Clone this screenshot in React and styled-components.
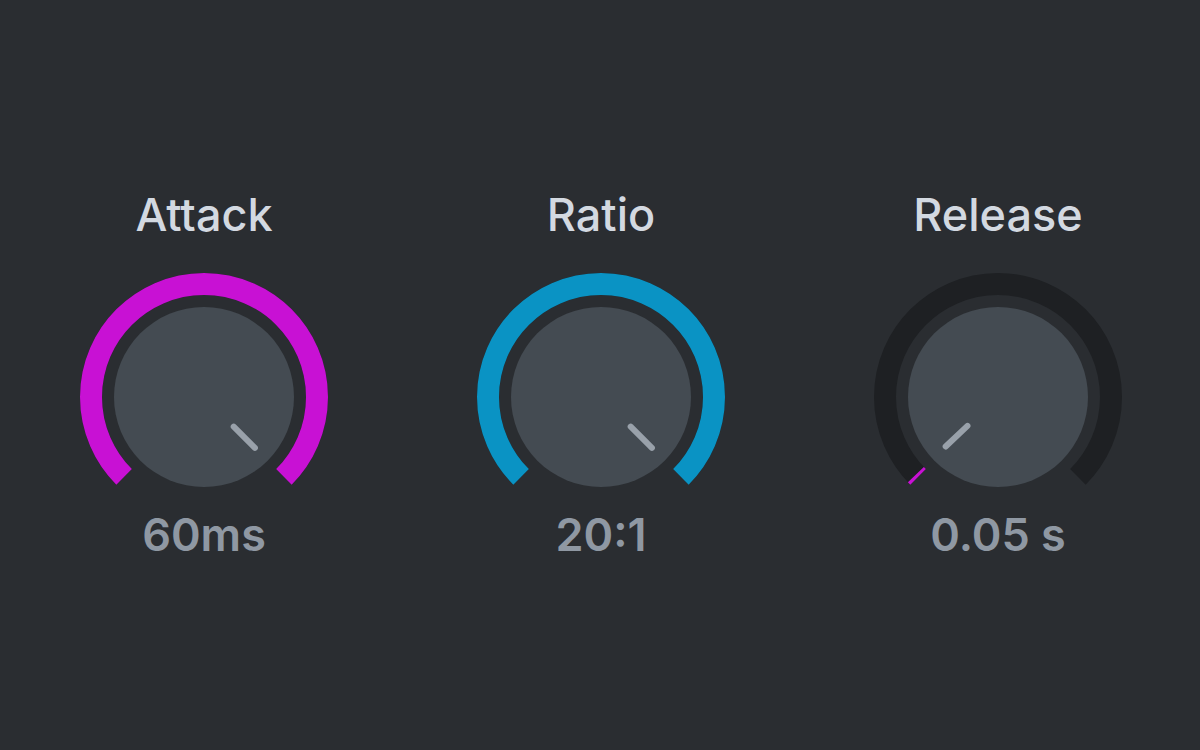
import React from 'react'
import styled, { createGlobalStyle } from 'styled-components'

const knobs = [
  { label: 'Attack', value: '60ms', fill: 1, color: '#c811d4' },
  { label: 'Ratio', value: '20:1', fill: 1, color: '#0a93c4' },
  { label: 'Release', value: '0.05 s', fill: 0.006, color: '#c811d4' },
]

const CX = 124
const CY = 124
const START = -135
const SWEEP = 270

function point(r, deg) {
  const a = (deg * Math.PI) / 180
  return [CX + r * Math.sin(a), CY - r * Math.cos(a)]
}

function arc(r, from, to) {
  const [x1, y1] = point(r, from)
  const [x2, y2] = point(r, to)
  const large = to - from > 180 ? 1 : 0
  return `M ${x1} ${y1} A ${r} ${r} 0 ${large} 1 ${x2} ${y2}`
}

function Knob({ fill, color }) {
  const end = START + SWEEP * fill
  const [px1, py1] = point(42, end)
  const [px2, py2] = point(72, end)
  return (
    <svg width="248" height="216" viewBox="0 0 248 216">
      <path d={arc(113, START, START + SWEEP)} fill="none" stroke="#1e2023" strokeWidth="22" />
      <path d={arc(113, START, end)} fill="none" stroke={color} strokeWidth="22" />
      <circle cx={CX} cy={CY} r="90" fill="#444b52" />
      <line x1={px1} y1={py1} x2={px2} y2={py2} stroke="#99a1aa" strokeWidth="6" strokeLinecap="round" />
    </svg>
  )
}

export default function App() {
  return (
    <>
      <GlobalStyle />
      <Page>
        <Row>
          {knobs.map((k) => (
            <Control key={k.label}>
              <Label>{k.label}</Label>
              <Knob fill={k.fill} color={k.color} />
              <Value>{k.value}</Value>
            </Control>
          ))}
        </Row>
      </Page>
    </>
  )
}

const GlobalStyle = createGlobalStyle`
  * { box-sizing: border-box; }
  html, body { margin: 0; padding: 0; background: #2a2d31; }
  body { font-family: Inter, 'Liberation Sans', sans-serif; }
`

const Page = styled.main`
  min-height: 100vh;
  display: flex;
  align-items: center;
  justify-content: center;
`

const Row = styled.div`
  display: flex;
  gap: 149px;
  margin-top: -1px;
  padding-left: 2px;
`

const Control = styled.section`
  width: 248px;
  display: flex;
  flex-direction: column;
  align-items: center;
  svg { display: block; margin-top: 36px; }
`

const Label = styled.h3`
  margin: 0;
  font-size: 45px;
  line-height: 44px;
  font-weight: 500;
  color: #d3d9e1;
`

const Value = styled.div`
  margin-top: 24px;
  font-size: 45px;
  line-height: 44px;
  font-weight: 600;
  color: #8f98a3;
`
